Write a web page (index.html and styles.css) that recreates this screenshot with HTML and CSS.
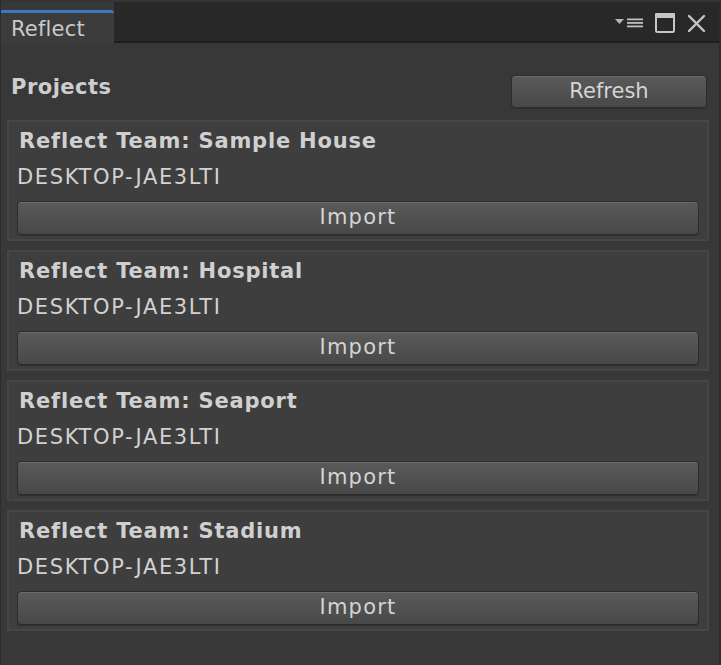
FILE: index.html
```html
<!DOCTYPE html>
<html>
<head>
<meta charset="utf-8">
<link rel="stylesheet" href="styles.css">
</head>
<body>
<div class="window">
  <div class="titlebar">
    <div class="tab">Reflect</div>
    <div class="bar">
      <svg class="controls" width="110" height="39" viewBox="609 2 110 39">
        <polygon points="615,19 624,19 619.5,24" fill="#b8b8b8"/>
        <rect x="627" y="18.5" width="16" height="1.8" fill="#c0c0c0"/>
        <rect x="627" y="22" width="16" height="1.8" fill="#c0c0c0"/>
        <rect x="627" y="25.5" width="16" height="1.8" fill="#c0c0c0"/>
        <rect x="656" y="14" width="18" height="18" rx="1.5" fill="none" stroke="#c6c6c6" stroke-width="2"/>
        <rect x="655" y="13" width="20" height="5" rx="1" fill="#c6c6c6"/>
        <path d="M689 16 L704 31 M704 16 L689 31" stroke="#c6c6c6" stroke-width="2.4" stroke-linecap="round"/>
      </svg>
    </div>
  </div>
  <div class="content">
    <div class="header">
      <span class="label">Projects</span>
      <button class="btn refresh">Refresh</button>
    </div>
    <div class="cards">
      <div class="card">
        <div class="card-title">Reflect Team: Sample House</div>
        <div class="card-host">DESKTOP-JAE3LTI</div>
        <button class="btn import">Import</button>
      </div>
      <div class="card">
        <div class="card-title">Reflect Team: Hospital</div>
        <div class="card-host">DESKTOP-JAE3LTI</div>
        <button class="btn import">Import</button>
      </div>
      <div class="card">
        <div class="card-title">Reflect Team: Seaport</div>
        <div class="card-host">DESKTOP-JAE3LTI</div>
        <button class="btn import">Import</button>
      </div>
      <div class="card">
        <div class="card-title">Reflect Team: Stadium</div>
        <div class="card-host">DESKTOP-JAE3LTI</div>
        <button class="btn import">Import</button>
      </div>
    </div>
  </div>
</div>
</body>
</html>
```

FILE: styles.css
```css
html, body {
  margin: 0;
  padding: 0;
  background: #383838;
}

.window {
  width: 721px;
  height: 665px;
  box-sizing: border-box;
  border-top: 2px solid #353535;
  border-left: 1px solid #2c2c2c;
  border-right: 2px solid #2c2c2c;
  background: #383838;
  font-family: "DejaVu Sans", Verdana, sans-serif;
  font-size: 21px;
  line-height: 24px;
  overflow: hidden;
}

.titlebar {
  display: flex;
  height: 41px;
}

.tab {
  width: 113px;
  margin-top: 8px;
  height: 33px;
  box-sizing: border-box;
  border-top: 3px solid #3a78bf;
  border-top-right-radius: 3px;
  background: #3c3c3c;
  color: #cacaca;
  padding: 4px 0 0 10px;
  letter-spacing: 0.2px;
}

.bar {
  flex: 1;
  display: flex;
  justify-content: flex-end;
  background: #282828;
  border-bottom: 2px solid #1e1e1e;
}

.controls {
  display: block;
}

.content {
  display: flex;
  flex-direction: column;
}

.header {
  display: flex;
  justify-content: space-between;
  align-items: flex-start;
  margin-top: 31px;
  padding: 0 12px 0 10px;
}

.label {
  font-weight: bold;
  color: #cecece;
  letter-spacing: 0.5px;
  margin-top: 1px;
}

.btn {
  font-family: "DejaVu Sans", Verdana, sans-serif;
  font-size: 21px;
  line-height: 28px;
  padding: 1px 0 3px 0;
  box-sizing: border-box;
  color: #d4d4d4;
  border: 1px solid #2c2c2c;
  border-radius: 4px;
  background: linear-gradient(#5a5a5a, #484848);
  box-shadow: inset 0 1px 0 #6c6c6c, 0 1px 0 #2f2f2f;
  text-align: center;
}

.refresh {
  width: 196px;
  height: 33px;
  margin-top: 1px;
  letter-spacing: 0px;
}

.cards {
  display: flex;
  flex-direction: column;
  gap: 9px;
  margin: 12px 10px 0 6px;
}

.card {
  height: 121px;
  box-sizing: border-box;
  border: 2px solid #464646;
  background: #3e3e3e;
  padding: 7px 8px 0 8px;
  display: flex;
  flex-direction: column;
}

.card-title {
  font-weight: bold;
  color: #d0d0d0;
  padding-left: 2px;
  letter-spacing: 0.8px;
}

.card-host {
  margin-top: 12px;
  color: #d2d2d2;
  letter-spacing: 1.65px;
}

.import {
  margin-top: 12px;
  height: 34px;
  width: 100%;
  letter-spacing: 1.2px;
}
```
